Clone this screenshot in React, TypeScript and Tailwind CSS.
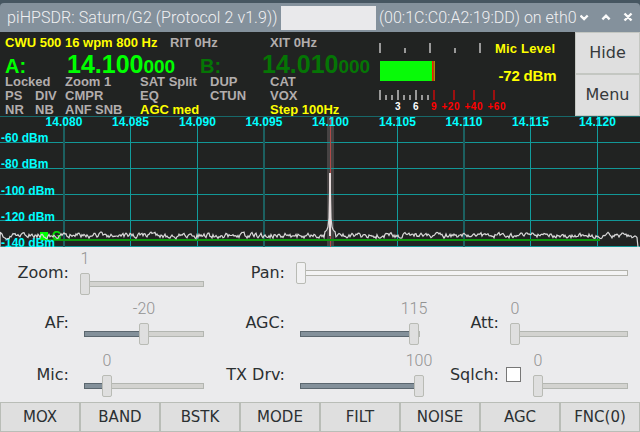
import React from 'react';

const SANS = "font-['Liberation_Sans',Arial,sans-serif]";
const UI = "font-['DejaVu_Sans',sans-serif]";

type Cell = { t: string; w: string; on?: boolean };

const rows: Cell[][] = [
  [
    { t: 'Locked', w: 'w-[60px]' },
    { t: 'Zoom 1', w: 'w-[75px]' },
    { t: 'SAT Split', w: 'w-[70px]' },
    { t: 'DUP', w: 'w-[60px]' },
    { t: 'CAT', w: 'w-[80px]' },
  ],
  [
    { t: 'PS', w: 'w-[30px]' },
    { t: 'DIV', w: 'w-[30px]' },
    { t: 'CMPR', w: 'w-[75px]' },
    { t: 'EQ', w: 'w-[70px]' },
    { t: 'CTUN', w: 'w-[60px]' },
    { t: 'VOX', w: 'w-[80px]' },
  ],
  [
    { t: 'NR', w: 'w-[30px]' },
    { t: 'NB', w: 'w-[30px]' },
    { t: 'ANF', w: 'w-[30px]' },
    { t: 'SNB', w: 'w-[45px]' },
    { t: 'AGC med', w: 'w-[130px]', on: true },
    { t: 'Step 100Hz', w: 'w-[90px]', on: true },
  ],
];

function TitleBar() {
  return (
    <header className="h-8 border-t-[3px] border-[#465661] bg-[#465661]">
      <div className="flex h-[29px] items-center rounded-t-[4px] bg-[#84919c] pl-[7px] font-[Roboto,sans-serif] text-base font-light whitespace-nowrap text-[#f0f0f2]">
        <span className="w-[274px] tracking-[0.08px]">piHPSDR: Saturn/G2 (Protocol 2 v1.9))</span>
        <span className="h-6 w-[95px] bg-[#e9e9eb]" />
        <span className="ml-[3px] w-[201px]">(00:1C:C0:A2:19:DD) on eth0</span>
        <svg width="60" height="29" viewBox="580 3 60 29" fill="none" stroke="#fafafa" strokeWidth="2.4">
          <path d="M580.5 15.5l3.6 3.6 3.6-3.6M602.4 19.3l3.6-3.6 3.6 3.6M624.5 13.5l7 7M631.5 13.5l-7 7" />
        </svg>
      </div>
    </header>
  );
}

function Vfo() {
  return (
    <div className="flex w-[375px] flex-col pl-[5px] text-[13px] leading-[14px] font-bold text-[#b2adad]">
      <div className="mt-[4px] flex h-[14px] whitespace-nowrap">
        <span className="w-[165px] text-[#ffff00]">CWU 500 16 wpm 800 Hz</span>
        <span className="w-[100px]">RIT 0Hz</span>
        <span>XIT 0Hz</span>
      </div>
      <div className="flex h-[25px] items-baseline leading-[29px] whitespace-nowrap">
        <span className="w-[62px] text-[20px] text-[#00ff00]">A:</span>
        <span className="w-[133px] text-[#00ff00]">
          <span className="text-[25px]">14.100</span>
          <span className="text-[19px]">000</span>
        </span>
        <span className="w-[62px] text-[20px] text-[#057505]">B:</span>
        <span className="text-[#057505]">
          <span className="text-[25px]">14.010</span>
          <span className="text-[19px]">000</span>
        </span>
      </div>
      {rows.map((row, i) => (
        <div key={i} className="flex h-[14px] whitespace-nowrap">
          {row.map((c) => (
            <span key={c.t} className={`${c.w} shrink-0 ${c.on ? 'text-[#ffff00]' : ''}`}>
              {c.t}
            </span>
          ))}
        </div>
      ))}
    </div>
  );
}

const sTicks = [0, 1, 2, 3, 4, 5, 6, 7, 8];

function Meter() {
  return (
    <svg width="200" height="84" viewBox="375 32 200 84" className="font-bold">
      {[380, 430, 480].map((x) => (
        <rect key={x} x={x - 1} y="43" width="2" height="10" fill="#999" />
      ))}
      {[405, 455].map((x) => (
        <rect key={x} x={x - 1} y="48" width="2" height="5" fill="#999" />
      ))}
      <rect x="380" y="61" width="52" height="20" fill="#08fa08" />
      <rect x="432" y="61" width="1.5" height="20" fill="#ff1500" />
      <rect x="433.5" y="61" width="1.5" height="20" fill="#a98a08" />
      {sTicks.map((i) => (
        <rect key={i} x={379 + i * 6} y={i % 3 ? 95 : 90} width="2" height={i % 3 ? 5 : 10} fill="#999" />
      ))}
      {[434, 454, 474, 494].map((x) => (
        <rect key={x} x={x - 1} y="90" width="2" height="10" fill="#9c1010" />
      ))}
      <g fontSize="10" fill="#ff0000">
        <text x="395" y="110" fill="#fff">3</text>
        <text x="413" y="110" fill="#fff">6</text>
        <text x="431" y="110">9</text>
        <text x="441.5" y="110" textLength="18">+20</text>
        <text x="464.5" y="110" textLength="18">+40</text>
        <text x="487.5" y="110" textLength="18">+60</text>
      </g>
      <g fill="#ffff00">
        <text x="495" y="53" fontSize="13" textLength="60">Mic Level</text>
        <text x="498.5" y="81" fontSize="15" textLength="58">-72 dBm</text>
      </g>
    </svg>
  );
}

// Noise floor sampled once per pixel, with the carrier rising at x = 330.
const trace = (() => {
  let seed = 41;
  let v = 0;
  const pts: string[] = ['0,237', '0.5,232'];
  for (let x = 1; x < 638; x += 1) {
    seed = (seed * 16807) % 2147483647;
    v = v * 0.5 + (seed / 2147483647 - 0.5) * 4.4;
    let y = 235.5 + v;
    const d = Math.abs(x - 330);
    if (d === 0) y = 173;
    else if (d === 1) y = 218;
    else if (d < 6) y = 235 - 18 / (d * 1.1);
    pts.push(`${x},${y.toFixed(1)}`);
  }
  pts.push('638,247');
  return pts.join(' ');
})();

const freqs = ['14.080', '14.085', '14.090', '14.095', '14.100', '14.105', '14.110', '14.115', '14.120'];
const lineX = [64, 130.5, 197.5, 264, 330.5, 397.5, 464, 530.5, 597.5];
const levels = [-60, -80, -100, -120, -140];

function Panadapter() {
  return (
    <svg width="640" height="131" viewBox="0 116 640 131" className="block bg-[#212322] font-bold">
      <rect x="327" y="116" width="7" height="131" fill="#464343" />
      {[116.5, 142.5, 168.5, 194.5, 220.5, 246.5].map((y) => (
        <path key={y} d={`M0 ${y}H640`} stroke={y === 116.5 ? '#17686a' : '#129797'} />
      ))}
      {lineX.map((x) =>
        x === 330.5 ? null : (
          <path key={x} d={`M${x} 116V247`} stroke={x % 1 ? '#129c9c' : '#1c6060'} strokeWidth={x % 1 ? 1 : 2} />
        ),
      )}
      <path d="M330.5 116V247" stroke="#b04a48" />
      <path d="M40 240H600" stroke="#0b980b" strokeWidth="2" />
      <g fill="#00ffff" fontSize="12">
        {freqs.map((f, i) => (
          <text key={f} x={lineX[i] - 18.5} y="126" textLength="37">{f}</text>
        ))}
        {levels.map((l, i) => (
          <text key={l} x="1" y={142 + i * 26 + (i > 1 ? 1 : 0)}>{`${l} dBm`}</text>
        ))}
      </g>
      <rect x="40" y="232" width="8" height="8" fill="#00ff00" />
      <text x="52" y="240" fontSize="12" fill="#00e000">G</text>
      <polyline points={trace} fill="none" stroke="#d8d8d8" strokeWidth="1.2" />
      <path d="M0.5 236V247" stroke="#999" />
      <path d="M330 236V173" stroke="#e9dede" strokeWidth="2" />
    </svg>
  );
}

type SliderProps = { value?: string; width: string; pos: number; filled?: boolean; pan?: boolean };

function Slider({ value, width, pos, filled, pan }: SliderProps) {
  return (
    <div className={`relative pt-[29px] ${width}`}>
      <div
        className={`h-[6px] w-full border ${pan ? 'border-[#b3b3ac] bg-[#f3f3f4]' : 'border-[#b3b6b1] bg-[#d3d3d0]'}`}
      />
      {filled && (
        <div className="absolute top-[29px] left-0 h-[6px] border border-[#5b676f] bg-[#83909a]" style={{ width: pos }} />
      )}
      <div
        className={`absolute top-[21px] h-[22px] w-[10px] rounded-[2px] border border-[#b9bbb5] ${pan ? 'bg-[#f1f1f2]' : 'bg-[#dfdfdf]'}`}
        style={{ left: pos - 5 }}
      />
      {value && (
        <span
          className="absolute -top-[3px] w-10 text-center font-[Roboto,sans-serif] text-base leading-5 font-light text-[#929292]"
          style={{ left: pos - 20 }}
        >
          {value}
        </span>
      )}
    </div>
  );
}

function Label({ children, width }: { children: string; width: string }) {
  return <span className={`${width} shrink-0 pt-[11px] text-right leading-5 whitespace-nowrap`}>{children}</span>;
}

function Controls() {
  return (
    <section className="h-[155px] bg-[#ebebed] pt-[5px] text-base text-[#2b3032]">
      <div className="flex h-[50px]">
        <Label width="w-[69px]">Zoom:</Label>
        <div className="ml-[15px]"><Slider value="1" width="w-[120px]" pos={1} /></div>
        <Label width="w-[81px]">Pan:</Label>
        <div className="-mt-[11px] ml-[15px]"><Slider width="w-[328px]" pos={1} pan /></div>
      </div>
      <div className="flex h-[52px]">
        <Label width="w-[69px]">AF:</Label>
        <div className="ml-[15px]"><Slider value="-20" width="w-[120px]" pos={60} filled /></div>
        <Label width="w-[81px]">AGC:</Label>
        <div className="ml-[15px]"><Slider value="115" width="w-[120px]" pos={114} filled /></div>
        <Label width="w-[79px]">Att:</Label>
        <div className="ml-[15px]"><Slider value="0" width="w-[114px]" pos={1} /></div>
      </div>
      <div className="flex h-[48px]">
        <Label width="w-[69px]">Mic:</Label>
        <div className="ml-[15px]"><Slider value="0" width="w-[120px]" pos={23} filled /></div>
        <Label width="w-[81px]">TX Drv:</Label>
        <div className="ml-[15px]"><Slider value="100" width="w-[120px]" pos={119} filled /></div>
        <Label width="w-[79px]">Sqlch:</Label>
        <span className="mt-[13px] ml-[7px] h-[15px] w-[15px] border border-[#777] bg-white" />
        <div className="ml-[16px]"><Slider value="0" width="w-[91px]" pos={1} /></div>
      </div>
    </section>
  );
}

const toolbar = ['MOX', 'BAND', 'BSTK', 'MODE', 'FILT', 'NOISE', 'AGC', 'FNC(0)'];

export default function App() {
  return (
    <div className={`h-[432px] w-[640px] overflow-hidden ${UI}`}>
      <TitleBar />
      <section className={`flex h-[84px] bg-[#212322] ${SANS}`}>
        <Vfo />
        <Meter />
        <div className={`flex w-[65px] flex-col text-base text-[#35393b] ${UI}`}>
          <button className="h-[42px] w-full border border-[#c4c7c2] bg-[#dfdfdf]">Hide</button>
          <button className="h-[42px] w-full border border-[#c4c7c2] bg-[#dfdfdf]">Menu</button>
        </div>
      </section>
      <div className={SANS}>
        <Panadapter />
      </div>
      <Controls />
      <footer className="grid h-[30px] grid-cols-8 text-[15px] text-[#2b3032]">
        {toolbar.map((b) => (
          <button key={b} className="border border-[#b9bdb7] bg-[#dfdfdf]">{b}</button>
        ))}
      </footer>
    </div>
  );
}
